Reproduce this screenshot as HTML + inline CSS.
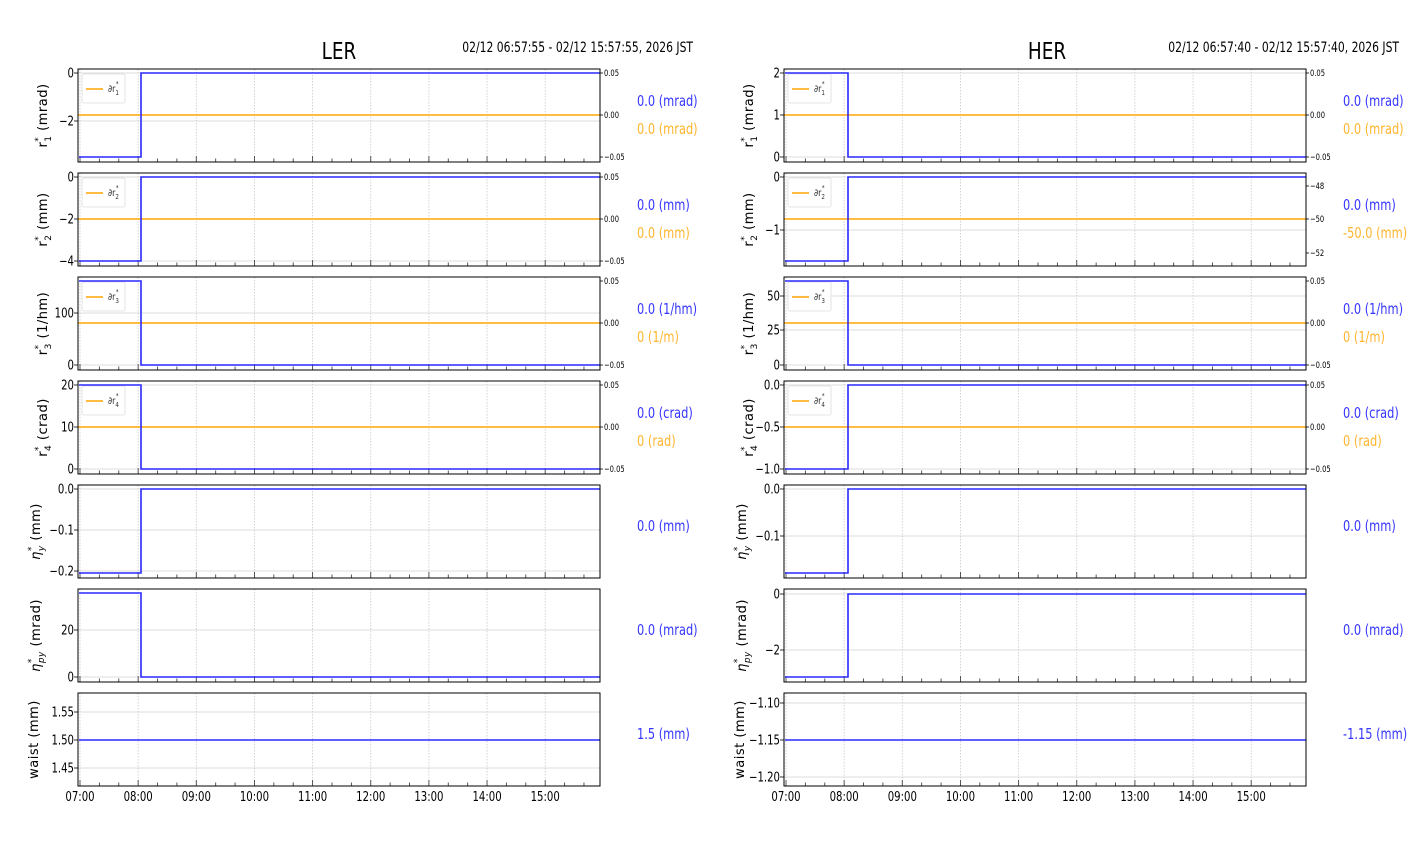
<!DOCTYPE html>
<html><head><meta charset="utf-8"><style>
html,body{margin:0;padding:0;background:#fff;width:1412px;height:864px;overflow:hidden}
svg{display:block}
text{font-family:"DejaVu Sans",sans-serif;fill:#000}
</style></head><body>
<svg id="s" width="1412" height="864" xmlns="http://www.w3.org/2000/svg"></svg>
<script>
const S=document.getElementById('s');let h='';
const M='−';
function T(x,y,fs,anc,c,fill,sx){sx=sx||0.78;return `<text transform="translate(${x},${y}) scale(${sx},1)" font-size="${fs}" text-anchor="${anc}"${fill?` style="fill:${fill}"`:''}>${c}</text>`;}
const tops=[69,173,277,381,485,589,693];const PH=93;
const ylabs=[['r','1','(mrad)'],['r','2','(mm)'],['r','3','(1/hm)'],['r','4','(crad)'],['η','y','(mm)'],['η','py','(mrad)'],['waist','','(mm)']];
const L={x0:78,x1:600,title:'LER',date:'02/12 06:57:55 - 02/12 15:57:55, 2026 JST',tx:339,dx:693,step:141,vx:637,
p:[
{t:[['0',73],[M+'2',121]],b:[157,73],o:115,r:[['0.05',73],['0.00',115],[M+'0.05',157]],v:'0.0 (mrad)',ov:'0.0 (mrad)'},
{t:[['0',177],[M+'2',219],[M+'4',261]],b:[261,177],o:219,r:[['0.05',177],['0.00',219],[M+'0.05',261]],v:'0.0 (mm)',ov:'0.0 (mm)'},
{t:[['100',313],['0',365]],b:[281,365],o:323,r:[['0.05',281],['0.00',323],[M+'0.05',365]],v:'0.0 (1/hm)',ov:'0 (1/m)'},
{t:[['20',385],['10',427],['0',469]],b:[385,469],o:427,r:[['0.05',385],['0.00',427],[M+'0.05',469]],v:'0.0 (crad)',ov:'0 (rad)'},
{t:[['0.0',489],[M+'0.1',530],[M+'0.2',571]],b:[573,489],v:'0.0 (mm)'},
{t:[['20',630],['0',677]],b:[593,677],v:'0.0 (mrad)'},
{t:[['1.55',712],['1.50',740],['1.45',768]],b:[740,740],v:'1.5 (mm)'}]};
const H={x0:784,x1:1306,title:'HER',date:'02/12 06:57:40 - 02/12 15:57:40, 2026 JST',tx:1047,dx:1399,step:848,vx:1343,
p:[
{t:[['2',73],['1',115],['0',157]],b:[73,157],o:115,r:[['0.05',73],['0.00',115],[M+'0.05',157]],v:'0.0 (mrad)',ov:'0.0 (mrad)'},
{t:[['0',177],[M+'1',230]],b:[261,177],o:219,r:[['−48',186],['−50',219],['−52',253]],v:'0.0 (mm)',ov:'-50.0 (mm)'},
{t:[['50',296],['25',330],['0',365]],b:[281,365],o:323,r:[['0.05',281],['0.00',323],[M+'0.05',365]],v:'0.0 (1/hm)',ov:'0 (1/m)'},
{t:[['0.0',385],[M+'0.5',427],[M+'1.0',469]],b:[469,385],o:427,r:[['0.05',385],['0.00',427],[M+'0.05',469]],v:'0.0 (crad)',ov:'0 (rad)'},
{t:[['0.0',489],[M+'0.1',536]],b:[573,489],v:'0.0 (mm)'},
{t:[['0',594],[M+'2',650]],b:[677,594],v:'0.0 (mrad)'},
{t:[['−1.10',703],['−1.15',740],['−1.20',777]],b:[740,740],v:'-1.15 (mm)'}]};
function side(C){
 const X=hr=>C.x0+2+hr*58.15;
 h+=T(C.tx,59,23,'middle',C.title,null,0.8);
 h+=T(C.dx,52,14,'end',C.date,null,0.77);
 C.p.forEach((p,i)=>{
  const y0=tops[i],y1=y0+PH;
  for(let k=0;k<=8;k++)h+=`<line x1="${X(k)}" x2="${X(k)}" y1="${y0}" y2="${y1}" stroke="#c8c8c8" stroke-width="0.8" stroke-dasharray="1.5,1.5"/>`;
  p.t.forEach(t=>{h+=`<line x1="${C.x0}" x2="${C.x1}" y1="${t[1]}" y2="${t[1]}" stroke="#d0d0d0" stroke-width="0.8"/>`;
   h+=`<line x1="${C.x0-4}" x2="${C.x0}" y1="${t[1]}" y2="${t[1]}" stroke="#000" stroke-width="0.8"/>`;
   h+=T(C.x0-4,t[1]+4.5,13,'end',t[0]);});
  for(let k=0;k<=26;k++){const x=C.x0+2+k*58.15/3;if(x>C.x1)break;const major=k%3==0;
   h+=`<line x1="${x}" x2="${x}" y1="${y1}" y2="${y1-(major?6:3.5)}" stroke="#444" stroke-width="0.9"/>`;}
  if(p.o!==undefined){
   h+=`<line x1="${C.x0}" x2="${C.x1}" y1="${p.o}" y2="${p.o}" stroke="#ffa500" stroke-width="1.5"/>`;
   p.r.forEach(r=>{h+=`<line x1="${C.x1}" x2="${C.x1+3}" y1="${r[1]}" y2="${r[1]}" stroke="#000" stroke-width="0.8"/>`;
    h+=T(C.x1+4,r[1]+3,9,'start',r[0],null,0.75);});
   h+=`<rect x="${C.x0+4}" y="${y0+5}" width="43" height="29" rx="2" fill="#fff" fill-opacity="0.85" stroke="#ddd" stroke-width="0.8"/>`;
   h+=`<line x1="${C.x0+8}" x2="${C.x0+25}" y1="${y0+20}" y2="${y0+20}" stroke="#ffa500" stroke-width="1.5"/>`;
   h+=`<text transform="translate(${C.x0+30},${y0+23}) scale(0.8,1)" font-size="10" style="fill:#333">∂r<tspan font-size="7" dy="3">${i+1}</tspan><tspan font-size="7" dx="-4" dy="-9">*</tspan></text>`;
   h+=T(C.vx,y0+37,15,'start',p.v,'#3535ff',0.76);
   h+=T(C.vx,y0+65,15,'start',p.ov,'#ffb52e',0.76);
  } else h+=T(C.vx,y0+46,15,'start',p.v,'#3535ff',0.76);
  h+=`<polyline points="${C.x0+1},${p.b[0]} ${C.step},${p.b[0]} ${C.step},${p.b[1]} ${C.x1},${p.b[1]}" fill="none" stroke="#2a2aff" stroke-width="1.6"/>`;
  h+=`<rect x="${C.x0}" y="${y0}" width="${C.x1-C.x0}" height="${PH}" fill="none" stroke="#000" stroke-width="1"/>`;
  const yl=ylabs[i],cy=y0+PH/2,lx=C.x0-(i>=4?38:31)+(i==6?-2:0);
  let lab;
  if(i==6)lab=`waist (mm)`;
  else lab=`<tspan font-style="${i>=4?'italic':'normal'}">${yl[0]}</tspan><tspan font-size="9" dy="-6">*</tspan><tspan font-size="9" dx="-5" dy="10" font-style="${i>=4?'italic':'normal'}">${yl[1]}</tspan><tspan dy="-4"> ${yl[2]}</tspan>`;
  h+=`<text transform="translate(${lx},${cy}) rotate(-90)" font-size="13" text-anchor="middle" style="letter-spacing:0.5px">${lab}</text>`;
 });
 for(let k=0;k<=8;k++)h+=T(X(k),801,13,'middle',String(7+k).padStart(2,'0')+':00');
}
side(L);side(H);
S.innerHTML=h;
</script>
</body></html>
